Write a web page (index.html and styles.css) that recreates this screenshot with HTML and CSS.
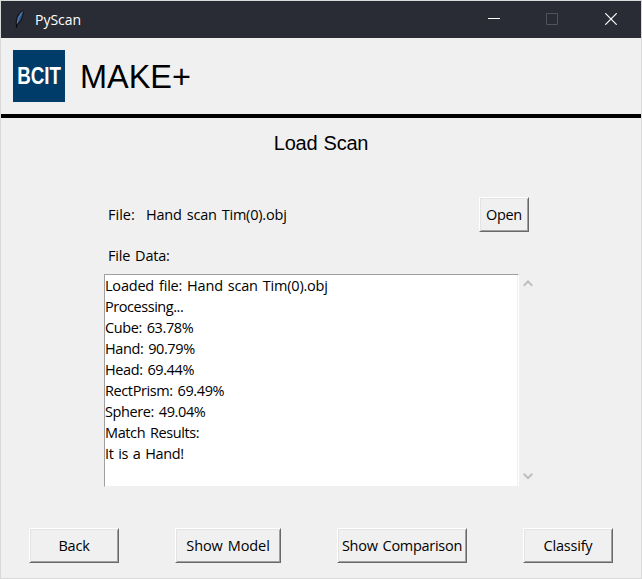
FILE: index.html
```html
<!DOCTYPE html>
<html lang="en">
<head>
<meta charset="utf-8">
<title>PyScan</title>
<link rel="stylesheet" href="styles.css">
</head>
<body>
<div class="window">
  <header class="titlebar">
    <svg class="feather" width="12" height="20" viewBox="0 0 12 20">
      <path d="M2 17 1.5 12 3 6.5 6 3 9.5 1 9.7 5 8 11 5 15 3 16z" fill="#14171d"/>
      <path d="M3 13.5 3.7 8 6 4.5 8.5 2.5 8.3 6 6.5 11 4 14z" fill="#2d568c"/>
      <path d="M3 15 4.5 9 8.5 2.5" fill="none" stroke="#7795b5" stroke-width=".7"/>
      <path d="M2.4 19 3 14.5" stroke="#0c0d10" stroke-width="1.3"/>
    </svg>
    <span class="app-name">PyScan</span>
    <div class="controls">
      <svg width="12" height="12" viewBox="0 0 12 12"><path d="M0 5.5H12" stroke="#fff"/></svg>
      <svg width="12" height="12" viewBox="0 0 12 12"><path d="M.5.5h11v11H.5z" fill="none" stroke="#50535a"/></svg>
      <svg width="12" height="12" viewBox="0 0 12 12"><path d="M.3.3 11.7 11.7M11.7.3.3 11.7" stroke="#fff" stroke-width="1.2"/></svg>
    </div>
  </header>
  <div class="brand">
    <div class="logo"><span>BCIT</span></div>
    <div class="brand-name">MAKE+</div>
  </div>
  <main>
    <h1>Load Scan</h1>
    <div class="file-row">
      <span class="file-label">File:</span>
      <span class="file-name">Hand scan Tim(0).obj</span>
      <button class="open">Open</button>
    </div>
    <div class="data-label">File Data:</div>
    <div class="data-row">
      <div class="output">
        <div class="loaded">Loaded file: Hand scan Tim(0).obj</div>
        <div class="progress">Processing...</div>
        <div class="score">Cube: 63.78%</div>
        <div class="score">Hand: 90.79%</div>
        <div class="score">Head: 69.44%</div>
        <div class="score">RectPrism: 69.49%</div>
        <div class="score">Sphere: 49.04%</div>
        <div class="score">Match Results:</div>
        <div class="score">It is a Hand!</div>
      </div>
      <div class="scroll">
        <svg width="10" height="8" viewBox="0 0 10 8"><path d="M.7 6.8 5 2.5 9.3 6.8" fill="none" stroke="#bfbfbf" stroke-width="2"/></svg>
        <svg width="10" height="8" viewBox="0 0 10 8"><path d="M.7 1.7 5 6 9.3 1.7" fill="none" stroke="#bfbfbf" stroke-width="2"/></svg>
      </div>
    </div>
    <div class="actions">
      <button class="back">Back</button>
      <button class="model">Show Model</button>
      <button class="compare">Show Comparison</button>
      <button class="classify">Classify</button>
    </div>
  </main>
</div>
</body>
</html>
```

FILE: styles.css
```css
* { box-sizing: border-box; }
body { margin: 0; overflow: hidden; }
.window {
  width: 642px; height: 579px;
  border: 1px solid #d9d9d9;
  background: #f0f0f0; color: #000;
  font: 14.5px/21px "Open Sans", "Noto Sans", sans-serif;
  letter-spacing: -0.2px;
  word-spacing: 1.4px;
  white-space: nowrap;
  display: flex; flex-direction: column;
}
.titlebar {
  height: 37px; background: #292c34; color: #fff;
  display: flex; align-items: center;
  padding: 0 24px 0 13px;
}
.feather { margin-right: 9px; margin-top: -1px; }
.app-name { font-size: 14px; letter-spacing: 0; }
.controls {
  margin: -2px 0 0 auto; display: flex; gap: 46px;
}
.controls svg:last-child { margin-left: 1px; }
.brand {
  height: 80px; border-bottom: 4px solid #000;
  display: flex; align-items: center; padding-left: 12px;
}
.logo {
  width: 52px; height: 52px; background: #003c69; color: #fff;
  display: flex; align-items: center; justify-content: center;
  font: bold 24px/1 "Liberation Sans", sans-serif; letter-spacing: 0;
}
.logo span { transform: scaleX(.78); }
.brand-name {
  margin-left: 15px;
  font: 34px/40px "Liberation Sans", sans-serif; letter-spacing: 0;
  transform: scaleX(.955); transform-origin: left;
}
main { flex: 1; display: flex; flex-direction: column; }
h1 {
  margin: 13px 0 0; text-align: center;
  font: 20px/24px "Liberation Sans", sans-serif;
  letter-spacing: -0.25px; word-spacing: 1px;
}
.file-row {
  margin: 42px 0 0 107px; width: 421px; height: 35px;
  display: flex; align-items: center;
}
.file-label { width: 38px; letter-spacing: 0; }
button {
  height: 35px; padding: 0; background: #f0f0f0; color: #000;
  border: 1px solid; border-color: #fff #696969 #696969 #fff;
  box-shadow: inset 1px 1px #e3e3e3, inset -1px -1px #a0a0a0;
  border-radius: 0; font: inherit; letter-spacing: inherit;
  word-spacing: inherit;
}
.open { width: 50px; margin-left: auto; letter-spacing: -0.35px; }
.data-label { margin: 13px 0 0 107px; }
.data-row { margin: 8px 0 0 103px; display: flex; height: 213px; }
.output {
  width: 415px; background: #fff;
  border: 1px solid; border-color: #a0a0a0 #fff #f0f0f0 #a0a0a0;
  box-shadow: inset -1px 0 #f0f0f0;
}
.progress { letter-spacing: -0.45px; }
.score { letter-spacing: -0.39px; }
.scroll {
  margin-left: 4px; padding: 5px 0 7px; display: flex;
  flex-direction: column; justify-content: space-between;
}
.actions {
  margin: 41px 28px 0; display: flex; justify-content: space-between;
}
.back, .classify { width: 90px; }
.model { width: 106px; letter-spacing: -0.1px; }
.compare { width: 130px; letter-spacing: -0.28px; }
```
